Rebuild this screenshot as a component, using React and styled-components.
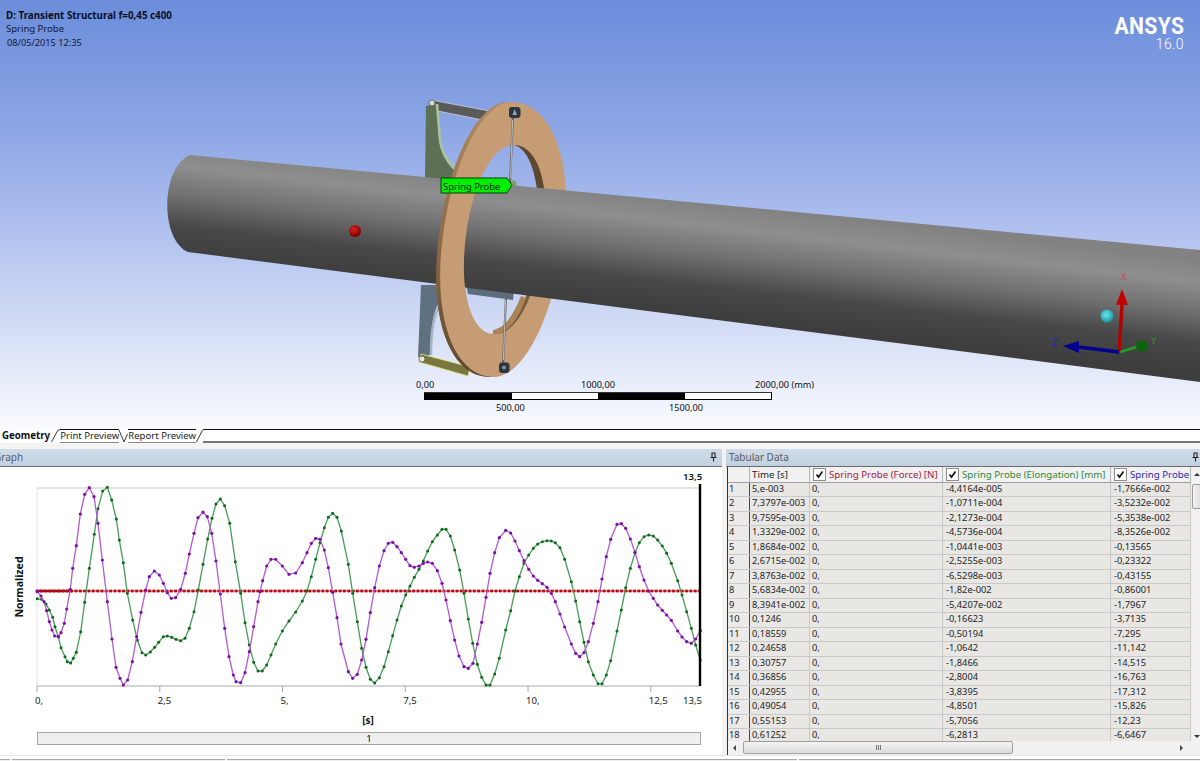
import React from "react";
import styled, { createGlobalStyle } from "styled-components";

const FONT = `"Noto Sans", "Open Sans", "DejaVu Sans", sans-serif`;

const Global = createGlobalStyle`
  html, body { margin: 0; padding: 0; background: #fff; overflow: hidden; }
  body { font-family: ${FONT}; }
`;

const Root = styled.div`
  width: 1200px;
  height: 761px;
  display: flex;
  flex-direction: column;
  overflow: hidden;
  background: #fff;
`;

/* ---------- 3D viewport ---------- */
const Viewport = styled.div`
  position: relative;
  height: 429px;
  flex: none;
  overflow: hidden;
  background: linear-gradient(180deg, #6b8ddb 0%, #8aa4e4 28%, #aebfee 52%, #d6dff6 78%, #f9fbff 100%);
`;
const ModelSvg = styled.svg`
  display: block;
  width: 1200px;
  height: 429px;
`;
const Caption = styled.div`
  position: absolute;
  left: 6px;
  top: 9px;
  color: #111a33;
  font-size: 9.5px;
  line-height: 13.4px;
`;
const CaptionTitle = styled.div`
  font-size: 9.8px;
  font-weight: 700;
  color: #0a1024;
`;
const CaptionDate = styled.div`
  font-size: 9.2px;
  padding-left: 1px;
`;
const Logo = styled.div`
  position: absolute;
  right: 16px;
  top: 13px;
  text-align: right;
  color: #fff;
`;
const LogoName = styled.div`
  font-family: Roboto, "Liberation Sans", sans-serif;
  font-weight: 700;
  font-size: 24px;
  line-height: 27px;
  letter-spacing: 0.4px;
  transform: scaleX(0.88);
  transform-origin: right center;
`;
const LogoVersion = styled.div`
  font-family: Roboto, "Liberation Sans", sans-serif;
  font-size: 14px;
  line-height: 13px;
  margin-top: -2px;
  letter-spacing: 0.4px;
  font-weight: 300;
`;
const ScaleBar = styled.div`
  position: absolute;
  left: 424px;
  top: 392px;
  width: 348px;
  height: 8px;
  box-sizing: border-box;
  display: flex;
  border: 1px solid #000;
  border-top-color: #333;
`;
const ScaleSegment = styled.div`
  flex: 1;
  background: ${(p) => (p.$dark ? "#000" : "#fff")};
`;
const ScaleLabel = styled.span`
  position: absolute;
  left: ${(p) => p.$x}px;
  top: ${(p) => p.$y}px;
  font-size: 9.2px;
  line-height: 12px;
  color: #111;
  white-space: nowrap;
`;

/* ---------- tab strip ---------- */
const TabStrip = styled.div`
  height: 14px;
  flex: none;
  display: flex;
  align-items: stretch;
  background: #fff;
`;
const Tab = styled.div`
  box-sizing: border-box;
  padding: ${(p) => (p.$active ? "0 1px 0 2px" : "0")};
  font-size: ${(p) => (p.$active ? "9.7px" : "9.6px")};
  line-height: 12px;
  font-weight: ${(p) => (p.$active ? 700 : 400)};
  color: ${(p) => (p.$active ? "#111" : "#222")};
  white-space: nowrap;
  border-top: ${(p) => (p.$active ? "1px solid #fff" : "1px solid #111")};
  border-bottom: 1px solid ${(p) => (p.$active ? "#fff" : "#8a8a8a")};
`;
const TabEdge = styled.svg`
  flex: none;
  display: block;
`;
const TabFill = styled.div`
  flex: 1;
  border-top: 1px solid #111;
  border-bottom: 2px solid #777;
`;
const StripGap = styled.div`
  height: 6px;
  flex: none;
  background: #f4f4f4;
`;

/* ---------- panels ---------- */
const Panels = styled.div`
  flex: 1;
  min-height: 0;
  display: flex;
  background: #f2f2f2;
`;
const GraphPanel = styled.section`
  width: 722px;
  flex: none;
  display: flex;
  flex-direction: column;
  background: #fff;
`;
const TablePanel = styled.section`
  flex: 1;
  min-width: 0;
  margin-left: 4px;
  display: flex;
  flex-direction: column;
`;
const PanelHeader = styled.header`
  height: 18px;
  flex: none;
  box-sizing: border-box;
  display: flex;
  align-items: center;
  justify-content: space-between;
  padding: 0 ${(p) => p.$padRight}px 1px ${(p) => p.$padLeft}px;
  background: linear-gradient(180deg, #cfdbe8, #c2d1e1);
  border-bottom: 1px solid #6c6c6c;
  color: #555c66;
  font-size: 10px;
  overflow: hidden;
`;
const CutTitle = styled.span`
  margin-left: -6px;
`;
const Pin = styled.svg`
  flex: none;
  display: block;
`;
const ChartSvg = styled.svg`
  display: block;
  width: 722px;
  height: 265px;
  flex: none;
`;
const PlayBar = styled.div`
  margin-left: 37px;
  width: 664px;
  height: 13px;
  box-sizing: border-box;
  display: flex;
  align-items: center;
  justify-content: center;
  background: #efefef;
  border: 1px solid #a5a5a5;
  font-size: 9.6px;
  color: #111;
`;

/* ---------- table ---------- */
const COLUMNS = "22px 60px 133px 168px 80px";
const TableArea = styled.div`
  flex: 1;
  min-height: 0;
  margin-left: 1px;
  border-left: 1px solid #333;
  display: flex;
  flex-direction: column;
  background: #f1f1f1;
`;
const TableBody = styled.div`
  height: 274px;
  flex: none;
  display: flex;
  overflow: hidden;
`;
const DataGrid = styled.div`
  width: 463px;
  flex: none;
  overflow: hidden;
`;
const HeadRow = styled.div`
  display: grid;
  grid-template-columns: ${COLUMNS};
  height: 15px;
  background: #f1f1f1;
  border-bottom: 1px solid #a0a0a0;
`;
const HeadCell = styled.div`
  display: flex;
  align-items: center;
  gap: 3px;
  height: 15px;
  overflow: hidden;
  padding-left: ${(p) => p.$pad ?? 2}px;
  box-sizing: border-box;
  font-size: 9.7px;
  line-height: 13px;
  white-space: nowrap;
  color: ${(p) => p.$color || "#222"};
  border-right: 1px solid #b5b5b5;
`;
const CheckBox = styled.span`
  width: 11px;
  height: 11px;
  flex: none;
  background: #fff;
  border: 1px solid #8e8e8e;
  display: flex;
  align-items: center;
  justify-content: center;
`;
const HeadText = styled.span`
  display: block;
  height: 11px;
  line-height: 11px;
  overflow: hidden;
`;
const Row = styled.div`
  display: grid;
  grid-template-columns: ${COLUMNS};
  height: 14.47px;
  box-sizing: border-box;
  background: #e9e7e4;
  border-bottom: 1px solid #c9c9c7;
`;
const Cell = styled.div`
  padding-left: ${(p) => p.$pad ?? 2}px;
  font-size: 9.3px;
  line-height: 12px;
  color: #1d1d1d;
  white-space: nowrap;
  overflow: hidden;
  border-right: 1px solid ${(p) => (p.$index ? "#4a4a4a" : "#c9c9c7")};
  background: ${(p) => (p.$index ? "#eceae8" : "transparent")};
`;
const VScroll = styled.div`
  flex: 1;
  min-width: 0;
  position: relative;
  background: #f1f1f1;
`;
const VThumb = styled.div`
  position: absolute;
  top: 17px;
  left: 1px;
  width: 11px;
  height: 25px;
  box-sizing: border-box;
  border: 1px solid #9a9a9a;
  border-radius: 2px;
  background: linear-gradient(90deg, #f3f3f3, #d9d9d9);
`;
const Arrow = styled.span`
  position: absolute;
  width: 0;
  height: 0;
  ${(p) => p.$dir === "up" && "top: 6px; left: 3px; border: 3px solid transparent; border-top: 0; border-bottom: 3px solid #333;"}
  ${(p) => p.$dir === "down" && "bottom: 3px; left: 3px; border: 3px solid transparent; border-bottom: 0; border-top: 3px solid #333;"}
  ${(p) => p.$dir === "left" && "left: 5px; top: 4px; border: 3px solid transparent; border-left: 0; border-right: 3px solid #444;"}
  ${(p) => p.$dir === "right" && "left: 452px; top: 4px; border: 3px solid transparent; border-right: 0; border-left: 3px solid #444;"}
`;
const HScroll = styled.div`
  height: 14px;
  flex: none;
  position: relative;
  background: #f1f1f1;
`;
const HThumb = styled.div`
  position: absolute;
  left: 15px;
  top: 0;
  width: 270px;
  height: 13px;
  box-sizing: border-box;
  border: 1px solid #a0a0a0;
  border-radius: 2px;
  background: linear-gradient(180deg, #f4f4f4, #dcdcdc);
  display: flex;
  align-items: center;
  justify-content: center;
  gap: 1px;
`;
const Grip = styled.span`
  width: 1px;
  height: 5px;
  background: #777;
`;
const BottomStrip = styled.div`
  height: 6px;
  flex: none;
  display: flex;
  gap: 2px;
  background: #fff;
  border-top: 1px solid #e6e6e6;
  padding-top: 3px;
  box-sizing: border-box;
`;
const BottomCell = styled.div`
  width: ${(p) => p.$w}px;
  flex: ${(p) => (p.$w ? "none" : 1)};
  border-top: 1px solid #a8a8a8;
  background: #efefef;
`;

/* ---------- chart data (read from the plotted curves) ---------- */
const mapPts = (pts, ox, oy, minX, maxX) =>
  pts
    .map(([x, y]) => [ox + x / 3, oy + y / 3])
    .filter(([x]) => x >= minX && x < maxX);

const purple = [
  ...mapPts([[22,335],[33,348],[42,365],[50,392],[58,425],[66,450],[74,468],[85,470],[93,458],[103,430],[110,387],[121,328],[128,265],[139,197],[151,102],[164,43],[178,23],[192,50],[204,130],[217,240],[232,365],[246,477],[258,562],[270,595],[280,615],[293,600],[307,545],[320,470],[333,397],[347,330],[358,290],[373,273],[388,285],[400,310],[412,338],[424,355],[437,353],[452,328],[466,280],[478,222],[492,160],[504,113],[519,96],[532,110],[545,160],[558,243],[571,342],[584,445],[597,530],[610,585],[618,605],[632,608],[645,578],[658,515],[671,440],[684,365]], 30, 480, 0, 260),
  ...mapPts([[0,335],[8,302],[20,258],[33,238],[47,238],[67,258],[87,283],[107,279],[127,248],[141,218],[154,190],[167,175],[180,178],[193,210],[205,263],[218,337],[231,413],[243,492],[265,575],[278,595],[292,583],[305,540],[318,478],[331,398],[344,323],[358,258],[372,212],[385,190],[398,187],[411,200],[424,218],[437,238],[450,257],[463,262],[477,258],[490,250],[503,246],[517,250],[532,272],[546,310],[558,360],[571,422],[584,480],[597,528],[612,560],[625,565],[639,550],[652,492],[665,427],[678,352],[691,278]], 260, 480, 260, 490),
  ...mapPts([[0,325],[14,263],[28,218],[47,196],[62,204],[75,228],[88,257],[102,287],[116,313],[130,333],[143,346],[157,356],[171,367],[184,385],[196,410],[210,447],[224,486],[244,537],[257,565],[269,575],[282,563],[295,530],[310,475],[324,410],[336,342],[349,275],[362,223],[381,178],[394,176],[407,190],[421,222],[435,262],[448,305],[462,345],[476,378],[490,400],[503,420],[517,436],[530,450],[544,466],[563,498],[576,516],[590,530],[604,535],[617,522],[631,497]], 490, 465, 490, 800),
];

const green = [
  ...mapPts([[22,356],[35,358],[48,372],[58,390],[68,412],[75,440],[85,470],[93,503],[105,530],[112,545],[122,549],[130,535],[139,517],[152,455],[164,367],[178,265],[193,163],[204,86],[218,33],[232,22],[245,60],[259,117],[268,180],[280,248],[292,340],[308,420],[322,480],[336,518],[347,525],[361,516],[374,502],[386,487],[400,470],[412,468],[425,472],[438,478],[452,482],[465,475],[478,445],[492,395],[505,330],[519,253],[533,177],[546,115],[558,72],[571,57],[584,77],[599,130],[616,245],[632,340],[645,428],[658,495],[671,547],[684,573]], 30, 480, 0, 260),
  ...mapPts([[7,573],[20,555],[33,525],[47,492],[67,453],[87,423],[107,396],[127,363],[141,333],[154,290],[167,238],[180,188],[193,143],[205,112],[218,100],[231,112],[244,153],[265,253],[278,340],[292,425],[305,505],[318,562],[331,598],[344,609],[358,593],[372,560],[385,515],[398,467],[411,420],[424,378],[437,345],[450,318],[463,292],[477,268],[490,243],[503,213],[517,185],[532,165],[546,148],[558,148],[571,168],[584,210],[599,270],[612,340],[625,417],[638,490],[652,553],[665,592],[678,615]], 260, 480, 260, 490),
  ...mapPts([[0,660],[14,627],[28,580],[47,495],[62,437],[75,378],[88,335],[102,295],[116,270],[130,250],[143,237],[157,230],[171,227],[184,228],[196,233],[210,248],[224,283],[244,350],[257,408],[269,470],[282,532],[295,590],[310,630],[324,656],[336,656],[349,630],[362,587],[381,498],[394,435],[407,368],[421,310],[435,263],[448,233],[462,215],[476,210],[490,213],[503,225],[517,243],[530,265],[544,295],[563,347],[576,390],[590,440],[604,490],[617,540],[631,585]], 490, 465, 490, 800),
];

/* chart svg starts at y = 467 in page coordinates */
const CHART_TOP = 467;
const line = (pts) => pts.map(([x, y]) => `${x.toFixed(1)},${(y - CHART_TOP).toFixed(1)}`).join(" ");
const redXs = Array.from({ length: 154 }, (_, i) => 37 + i * 4.33);
const ticks = [
  [37, "0,"],
  [159.8, "2,5"],
  [282.5, "5,"],
  [405.3, "7,5"],
  [528, "10,"],
  [650.8, "12,5"],
];

const rows = [
  ["5,e-003", "-4,4164e-005", "-1,7666e-002"],
  ["7,3797e-003", "-1,0711e-004", "-3,5232e-002"],
  ["9,7595e-003", "-2,1273e-004", "-5,3538e-002"],
  ["1,3329e-002", "-4,5736e-004", "-8,3526e-002"],
  ["1,8684e-002", "-1,0441e-003", "-0,13565"],
  ["2,6715e-002", "-2,5255e-003", "-0,23322"],
  ["3,8763e-002", "-6,5298e-003", "-0,43155"],
  ["5,6834e-002", "-1,82e-002", "-0,86001"],
  ["8,3941e-002", "-5,4207e-002", "-1,7967"],
  ["0,1246", "-0,16623", "-3,7135"],
  ["0,18559", "-0,50194", "-7,295"],
  ["0,24658", "-1,0642", "-11,142"],
  ["0,30757", "-1,8466", "-14,515"],
  ["0,36856", "-2,8004", "-16,763"],
  ["0,42955", "-3,8395", "-17,312"],
  ["0,49054", "-4,8501", "-15,826"],
  ["0,55153", "-5,7056", "-12,23"],
  ["0,61252", "-6,2813", "-6,6467"],
];

const Check = () => (
  <svg width="9" height="9" viewBox="0 0 9 9">
    <path d="M1.5 4.5 L3.5 7 L7.5 1.5" fill="none" stroke="#111" strokeWidth="1.7" />
  </svg>
);

const PinIcon = () => (
  <Pin width="9" height="10" viewBox="0 0 9 10">
    <path d="M2.5 1h4M3 1v4.5M6 1v4.5M1.5 5.5h6M4.5 5.5V9.5" fill="none" stroke="#222" strokeWidth="1.1" />
  </Pin>
);

const ringOuter = "M513,102 C552,104 575,162 563,245 C551,325 521,379 492,377 C454,375 432,318 443,235 C454,155 485,100 513,102 Z";
const ringHole = "M515,145 C540,147 551,190 543,245 C535,298 516,336 493,334 C470,332 459,290 466,235 C473,182 494,143 515,145 Z";
const shaftPath = "M190,155 L1200,250 L1200,382 L188,252 C160,240 160,168 190,155 Z";
const ringRing = `${ringOuter} ${ringHole}`;

const Model = () => (
  <ModelSvg viewBox="0 0 1200 429">
    <defs>
      <linearGradient id="shaft" gradientUnits="userSpaceOnUse" x1="706.5" y1="203" x2="693.5" y2="317">
        <stop offset="0" stopColor="#828282" />
        <stop offset="0.2" stopColor="#8e8e8e" />
        <stop offset="0.45" stopColor="#717171" />
        <stop offset="0.72" stopColor="#484848" />
        <stop offset="1" stopColor="#3d3d3d" />
      </linearGradient>
      <radialGradient id="redBall" cx="0.4" cy="0.35" r="0.7">
        <stop offset="0" stopColor="#e02020" />
        <stop offset="1" stopColor="#6e0000" />
      </radialGradient>
      <radialGradient id="cyanBall" cx="0.45" cy="0.4" r="0.65">
        <stop offset="0" stopColor="#6fe9ee" />
        <stop offset="1" stopColor="#0e8f98" />
      </radialGradient>
      <clipPath id="frontRing">
        <rect x="400" y="0" width="78" height="429" />
      </clipPath>
      <linearGradient id="ringSide" x1="0" y1="0" x2="0" y2="1">
        <stop offset="0" stopColor="#b08a62" />
        <stop offset="0.55" stopColor="#8a6844" />
        <stop offset="1" stopColor="#5e462c" />
      </linearGradient>
    </defs>

    {/* top bracket */}
    <path d="M431,100 L500,113 L498,123 L428,109 Z" fill="#5a5a5a" stroke="#e8e8e8" strokeWidth="0.6" />
    <path d="M426,106 L437,104 L439,140 C441,155 448,165 456,172 L452,180 L425,178 Z" fill="#5d6f54" />
    <path d="M437,104 L440,140 C442,155 449,163 455,168" fill="none" stroke="#a9c59a" strokeWidth="2.5" />
    <circle cx="432" cy="103" r="3" fill="#d8d8d8" stroke="#555" strokeWidth="0.8" />
    {/* bottom bracket */}
    <path d="M421,285 L443,285 L441,300 C433,310 431,325 431,355 L418,357 Z" fill="#5f7180" />
    <path d="M441,305 C434,312 431,330 431,355" fill="none" stroke="#a5b4c2" strokeWidth="2.5" />
    <path d="M421,354 L470,367 L468,376 L419,362 Z" fill="#79773f" stroke="#e4e27a" strokeWidth="0.8" />
    <circle cx="422" cy="359" r="3" fill="#e8e8d0" stroke="#555" strokeWidth="0.8" />

    {/* ring: side wall, then face, then what shows of the bore */}
    <path d={ringRing} transform="translate(-4 0)" fill="url(#ringSide)" fillRule="evenodd" />
    <path d={ringRing} fill="#c59c73" fillRule="evenodd" />
    <path d="M515,145 C540,147 551,190 543,245 L536,245 C543,195 534,152 515,145 Z" fill="#5d4730" />
    <path d="M493,334 C508,335 519,318 526,298 L521,296 C514,314 505,328 493,330 Z" fill="#a98458" />

    {/* arm behind the shaft, seen through the bore */}
    <path d="M466,284 L514,290 L513,300 L468,294 Z" fill="#5c6c7c" />

    {/* springs */}
    <path d="M513,116 L510,182" stroke="#6a6a6a" strokeWidth="2.2" />
    <path d="M512.6,120 L510.6,178" stroke="#c4c4c4" strokeWidth="0.9" />
    <path d="M506,296 L503,365" stroke="#6a6a6a" strokeWidth="2.2" />
    <path d="M505.6,300 L503.4,360" stroke="#c4c4c4" strokeWidth="0.9" />
    <path d="M511,180 L516,181 L518,190 L509,190 Z" fill="#7fa26e" />
    <rect x="509" y="107" width="11.5" height="11" rx="3" fill="#2a3642" />
    <path d="M514.6,109 L517,115 L512.4,115 Z" fill="#a0a6ac" />
    <rect x="499" y="362.5" width="10.5" height="10.5" rx="3" fill="#2a3642" />
    <circle cx="504" cy="367.5" r="2" fill="#8c9096" />

    {/* shaft */}
    <path d={shaftPath} fill="url(#shaft)" />

    {/* ring, part that passes in front of the shaft */}
    <g clipPath="url(#frontRing)">
      <path d={ringRing} transform="translate(-4 0)" fill="url(#ringSide)" fillRule="evenodd" />
      <path d={ringRing} fill="#c59c73" fillRule="evenodd" />
    </g>

    <circle cx="355" cy="231" r="6" fill="url(#redBall)" />

    {/* probe tag */}
    <path d="M441,178 L507,178 L512,185 L507,193 L441,193 Z" fill="#00ee00" stroke="#0a3a0a" strokeWidth="1" />
    <text x="443" y="190" fontSize="9.4" fontFamily={FONT} fill="#0a2a0a">Spring Probe</text>

    {/* triad */}
    <path d="M1119,352 L1122,305" stroke="#b80000" strokeWidth="3.4" />
    <path d="M1122,289 L1116,305 L1128,305 Z" fill="#c40000" />
    <path d="M1119,352 L1078,347" stroke="#00008c" strokeWidth="3.6" />
    <path d="M1063,346 L1079,341 L1079,353 Z" fill="#000090" />
    <path d="M1120,352 L1140,346" stroke="#22a022" strokeWidth="2.6" />
    <circle cx="1142" cy="346" r="6" fill="#0c640c" />
    <circle cx="1107" cy="316" r="6.5" fill="url(#cyanBall)" />
    <text x="1121" y="280" fontSize="9.5" fontFamily={FONT} fill="#c84848">X</text>
    <text x="1151" y="344" fontSize="9.5" fontFamily={FONT} fill="#2a9a2a">Y</text>
    <text x="1052" y="346" fontSize="9.5" fontFamily={FONT} fill="#2020c0">Z</text>
  </ModelSvg>
);

const Chart = () => (
  <ChartSvg viewBox="0 0 722 265">
    <line x1="37" y1={488 - CHART_TOP} x2="700" y2={488 - CHART_TOP} stroke="#c8c8c8" strokeWidth="1" />
    <line x1="37" y1={488 - CHART_TOP} x2="37" y2={686 - CHART_TOP} stroke="#e2e2e2" strokeWidth="1" />
    <line x1="37" y1={686 - CHART_TOP} x2="700" y2={686 - CHART_TOP} stroke="#a8a8a8" strokeWidth="1" />
    {ticks.map(([x]) => (
      <line key={x} x1={x} y1={686 - CHART_TOP} x2={x} y2={692 - CHART_TOP} stroke="#a8a8a8" strokeWidth="1" />
    ))}
    {ticks.map(([x, t]) => (
      <text key={t} x={x - 2} y={704 - CHART_TOP} fontSize="9.6" fontFamily={FONT} fill="#222">{t}</text>
    ))}
    <text x="683" y={704 - CHART_TOP} fontSize="9.6" fontFamily={FONT} fill="#222">13,5</text>
    <text x="683" y={480 - CHART_TOP} fontSize="9.6" fontWeight="600" fontFamily={FONT} fill="#111">13,5</text>
    <text transform={`translate(23 ${587 - CHART_TOP}) rotate(-90)`} textAnchor="middle" fontSize="10.6" fontWeight="700" fontFamily={FONT} fill="#111">Normalized</text>
    <text x="368" y={724 - CHART_TOP} textAnchor="middle" fontSize="10" fontWeight="700" fontFamily={FONT} fill="#111">[s]</text>

    <line x1="37" y1={591 - CHART_TOP} x2="700" y2={591 - CHART_TOP} stroke="#e87070" strokeWidth="1.4" />
    <line x1="37" y1={591 - CHART_TOP} x2="72" y2={591 - CHART_TOP} stroke="#b00010" strokeWidth="2.4" />
    {redXs.map((x) => (
      <rect key={x} x={x - 1.4} y={591 - CHART_TOP - 1.4} width="2.8" height="2.8" fill="#b40a14" />
    ))}

    <polyline points={line(green)} fill="none" stroke="#4a9a5a" strokeWidth="1.3" />
    {green.map(([x, y], i) => (
      <circle key={i} cx={x} cy={y - CHART_TOP} r="1.5" fill="#0c6a18" />
    ))}
    <polyline points={line(purple)} fill="none" stroke="#b45ad0" strokeWidth="1.3" />
    {purple.map(([x, y], i) => (
      <circle key={i} cx={x} cy={y - CHART_TOP} r="1.6" fill="#7a10a8" />
    ))}
    <line x1="700" y1={484 - CHART_TOP} x2="700" y2={686 - CHART_TOP} stroke="#000" strokeWidth="2.4" />
  </ChartSvg>
);

export default function App() {
  return (
    <Root>
      <Global />
      <Viewport>
        <Model />
        <Caption>
          <CaptionTitle>D: Transient Structural f=0,45 c400</CaptionTitle>
          <div>Spring Probe</div>
          <CaptionDate>08/05/2015 12:35</CaptionDate>
        </Caption>
        <Logo>
          <LogoName>ANSYS</LogoName>
          <LogoVersion>16.0</LogoVersion>
        </Logo>
        <ScaleLabel $x={416} $y={379}>0,00</ScaleLabel>
        <ScaleLabel $x={581} $y={379}>1000,00</ScaleLabel>
        <ScaleLabel $x={755} $y={379}>2000,00 (mm)</ScaleLabel>
        <ScaleBar>
          <ScaleSegment $dark />
          <ScaleSegment />
          <ScaleSegment $dark />
          <ScaleSegment />
        </ScaleBar>
        <ScaleLabel $x={496} $y={402}>500,00</ScaleLabel>
        <ScaleLabel $x={669} $y={402}>1500,00</ScaleLabel>
      </Viewport>

      <TabStrip>
        <Tab $active>Geometry</Tab>
        <TabEdge width="9" height="14" viewBox="0 0 9 14">
          <path d="M0.5 13 L7 1 L9 1" fill="none" stroke="#222" strokeWidth="0.9" />
        </TabEdge>
        <Tab>Print Preview</Tab>
        <TabEdge width="9" height="14" viewBox="0 0 9 14">
          <path d="M0 1 L5 13 L8.5 5" fill="none" stroke="#222" strokeWidth="0.9" />
        </TabEdge>
        <Tab>Report Preview</Tab>
        <TabEdge width="7" height="14" viewBox="0 0 7 14">
          <path d="M0.5 13 L6.5 1" fill="none" stroke="#222" strokeWidth="0.9" />
        </TabEdge>
        <TabFill />
      </TabStrip>
      <StripGap />

      <Panels>
        <GraphPanel>
          <PanelHeader $padLeft={0} $padRight={4}>
            <CutTitle>Graph</CutTitle>
            <PinIcon />
          </PanelHeader>
          <Chart />
          <PlayBar>1</PlayBar>
        </GraphPanel>

        <TablePanel>
          <PanelHeader $padLeft={3} $padRight={0}>
            <span>Tabular Data</span>
            <PinIcon />
          </PanelHeader>
          <TableArea>
            <TableBody>
              <DataGrid>
                <HeadRow>
                  <HeadCell />
                  <HeadCell>Time [s]</HeadCell>
                  <HeadCell $color="#a3203a" $pad={3}>
                    <CheckBox><Check /></CheckBox>
                    <HeadText>Spring Probe (Force) [N]</HeadText>
                  </HeadCell>
                  <HeadCell $color="#2a8a3a" $pad={3}>
                    <CheckBox><Check /></CheckBox>
                    <HeadText>Spring Probe (Elongation) [mm]</HeadText>
                  </HeadCell>
                  <HeadCell $color="#2a2ab0" $pad={3}>
                    <CheckBox><Check /></CheckBox>
                    <HeadText>Spring Probe</HeadText>
                  </HeadCell>
                </HeadRow>
                {rows.map((r, i) => (
                  <Row key={i}>
                    <Cell $index $pad={1}>{i + 1}</Cell>
                    <Cell>{r[0]}</Cell>
                    <Cell>0,</Cell>
                    <Cell $pad={3}>{r[1]}</Cell>
                    <Cell $pad={3}>{r[2]}</Cell>
                  </Row>
                ))}
              </DataGrid>
              <VScroll>
                <Arrow $dir="up" />
                <VThumb />
                <Arrow $dir="down" />
              </VScroll>
            </TableBody>
            <HScroll>
              <Arrow $dir="left" />
              <HThumb><Grip /><Grip /><Grip /></HThumb>
              <Arrow $dir="right" />
            </HScroll>
          </TableArea>
        </TablePanel>
      </Panels>
      <BottomStrip>
        <BottomCell $w={10} />
        <BottomCell $w={213} />
        <BottomCell $w={570} />
        <BottomCell />
      </BottomStrip>
    </Root>
  );
}
